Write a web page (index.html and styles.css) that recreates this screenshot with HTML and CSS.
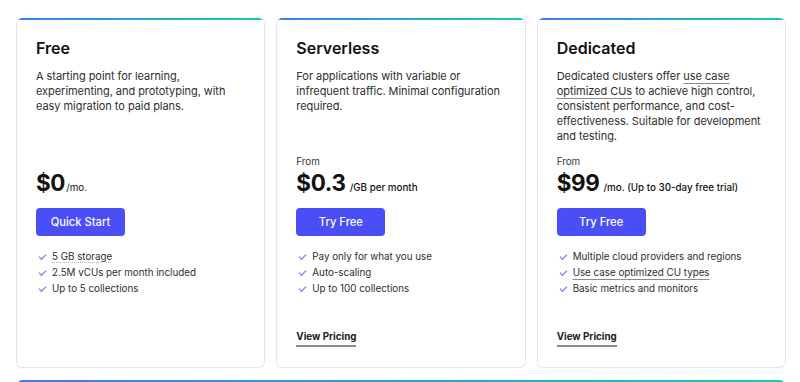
FILE: index.html
```html
<!DOCTYPE html>
<html lang="en">
<head>
    <meta charset="UTF-8">
    <title>Pricing Plans</title>
    <link rel="stylesheet" href="styles.css">
</head>
<body>

    <div class="plans">
        <div class="plan-grid">
            <!-- Free -->
            <div class="plan-card">
                <div class="plan-bar"></div>
                <div class="plan-body">
                    <h2 class="plan-title">Free</h2>
                    <p class="plan-desc">A starting point for learning, experimenting, and prototyping, with easy migration to paid plans.</p>
                    <div class="plan-from hidden">From</div>
                    <div class="plan-price"><span class="amount">$0</span><span class="unit tight">/mo.</span></div>
                    <a href="#" class="plan-btn">Quick Start</a>
                    <ul class="plan-features">
                        <li><span class="check"></span><span class="dotted">5 GB storage</span></li>
                        <li><span class="check"></span><span>2.5M vCUs per month included</span></li>
                        <li><span class="check"></span><span>Up to 5 collections</span></li>
                    </ul>
                </div>
            </div>

            <!-- Serverless -->
            <div class="plan-card">
                <div class="plan-bar"></div>
                <div class="plan-body">
                    <h2 class="plan-title">Serverless</h2>
                    <p class="plan-desc">For applications with variable or infrequent traffic. Minimal configuration required.</p>
                    <div class="plan-from">From</div>
                    <div class="plan-price"><span class="amount">$0.3</span><span class="unit">/GB per month</span></div>
                    <a href="#" class="plan-btn">Try Free</a>
                    <ul class="plan-features">
                        <li><span class="check"></span><span>Pay only for what you use</span></li>
                        <li><span class="check"></span><span>Auto-scaling</span></li>
                        <li><span class="check"></span><span>Up to 100 collections</span></li>
                    </ul>
                    <a href="#" class="view-pricing">View Pricing</a>
                </div>
            </div>

            <!-- Dedicated -->
            <div class="plan-card">
                <div class="plan-bar"></div>
                <div class="plan-body">
                    <h2 class="plan-title">Dedicated</h2>
                    <p class="plan-desc">Dedicated clusters offer <a href="#" class="inline-link">use case optimized CUs</a> to achieve high control, consistent performance, and cost-effectiveness. Suitable for development and testing.</p>
                    <div class="plan-from">From</div>
                    <div class="plan-price"><span class="amount">$99</span><span class="unit">/mo. (Up to 30-day free trial)</span></div>
                    <a href="#" class="plan-btn">Try Free</a>
                    <ul class="plan-features">
                        <li><span class="check"></span><span>Multiple cloud providers and regions</span></li>
                        <li><span class="check"></span><a href="#" class="inline-link">Use case optimized CU types</a></li>
                        <li><span class="check"></span><span>Basic metrics and monitors</span></li>
                    </ul>
                    <a href="#" class="view-pricing">View Pricing</a>
                </div>
            </div>
        </div>

        <!-- 다음 섹션 (상단만 보임) -->
        <div class="plan-wide">
            <div class="plan-bar"></div>
        </div>
    </div>

</body>
</html>
```

FILE: styles.css
```css
body {
    margin: 0;
    font-family: Inter, "Noto Sans", Arial, sans-serif;
    background-color: #fff;
    color: #2b2b2b;
    overflow: hidden;
}

.plans {
    padding: 18px 14px 0 16px;
}

.plan-grid {
    display: grid;
    grid-template-columns: repeat(3, 1fr);
    gap: 11px;
}

.plan-card {
    display: flex;
    flex-direction: column;
    background-color: #fff;
    border: 1px solid #e3e6ec;
    border-top: none;
    border-radius: 6px;
    overflow: hidden;
}

.plan-bar {
    height: 2px;
    background: linear-gradient(90deg, #3f7bf7, #14cdb3);
}

.plan-body {
    flex: 1;
    display: flex;
    flex-direction: column;
    align-items: flex-start;
    padding: 16px 19px 20px;
}

.plan-title {
    margin: 0;
    font-size: 16px;
    line-height: 24px;
    font-weight: 600;
    color: #111;
}

.plan-desc {
    margin: 9px 0 0;
    min-height: 75px;
    font-size: 11px;
    line-height: 15px;
    letter-spacing: -0.05px;
    color: #2e2e2e;
}

.inline-link {
    color: inherit;
    text-decoration: underline;
    text-decoration-color: #8a8a8a;
    text-decoration-thickness: 1px;
    text-underline-offset: 3px;
}

.plan-from {
    margin-top: 11px;
    font-size: 9.8px;
    line-height: 14px;
    color: #333;
}

.plan-from.hidden {
    visibility: hidden;
}

.plan-price {
    display: flex;
    align-items: baseline;
    height: 28px;
    line-height: 28px;
    color: #111;
}

.plan-price .amount {
    font-size: 22.4px;
    font-weight: 700;
    letter-spacing: -0.3px;
}

.plan-price .unit {
    margin-left: 4px;
    font-size: 9.8px;
    font-weight: 500;
}

.plan-price .unit.tight {
    margin-left: 1px;
    font-weight: 400;
}

.plan-btn {
    display: inline-flex;
    align-items: center;
    justify-content: center;
    margin-top: 11px;
    width: 89px;
    height: 28px;
    background-color: #4a4ef6;
    color: #fff;
    font-size: 11.2px;
    font-weight: 500;
    text-decoration: none;
    border-radius: 4px;
}

.plan-btn:hover {
    background-color: #3b3fe0;
}

.plan-features {
    list-style: none;
    margin: 13px 0 0;
    padding: 0 0 0 3px;
    font-size: 9.8px;
    line-height: 16px;
    color: #2e2e2e;
}

.plan-features li {
    display: flex;
    align-items: center;
    gap: 6px;
}

.check {
    width: 6px;
    height: 3px;
    margin-top: -2px;
    border-left: 1.3px solid #6a6cf2;
    border-bottom: 1.3px solid #6a6cf2;
    transform: rotate(-45deg);
}

.dotted {
    text-decoration: underline dotted #b5b5b5;
    text-underline-offset: 2px;
}

.view-pricing {
    margin-top: 33px;
    padding-bottom: 1px;
    font-size: 9.8px;
    line-height: 14px;
    font-weight: 700;
    color: #222;
    text-decoration: none;
    border-bottom: 2px solid #8a8a8a;
}

.plan-wide {
    margin-top: 12px;
    height: 40px;
    border: 1px solid #e3e6ec;
    border-top: none;
    border-radius: 6px;
    overflow: hidden;
}
```
